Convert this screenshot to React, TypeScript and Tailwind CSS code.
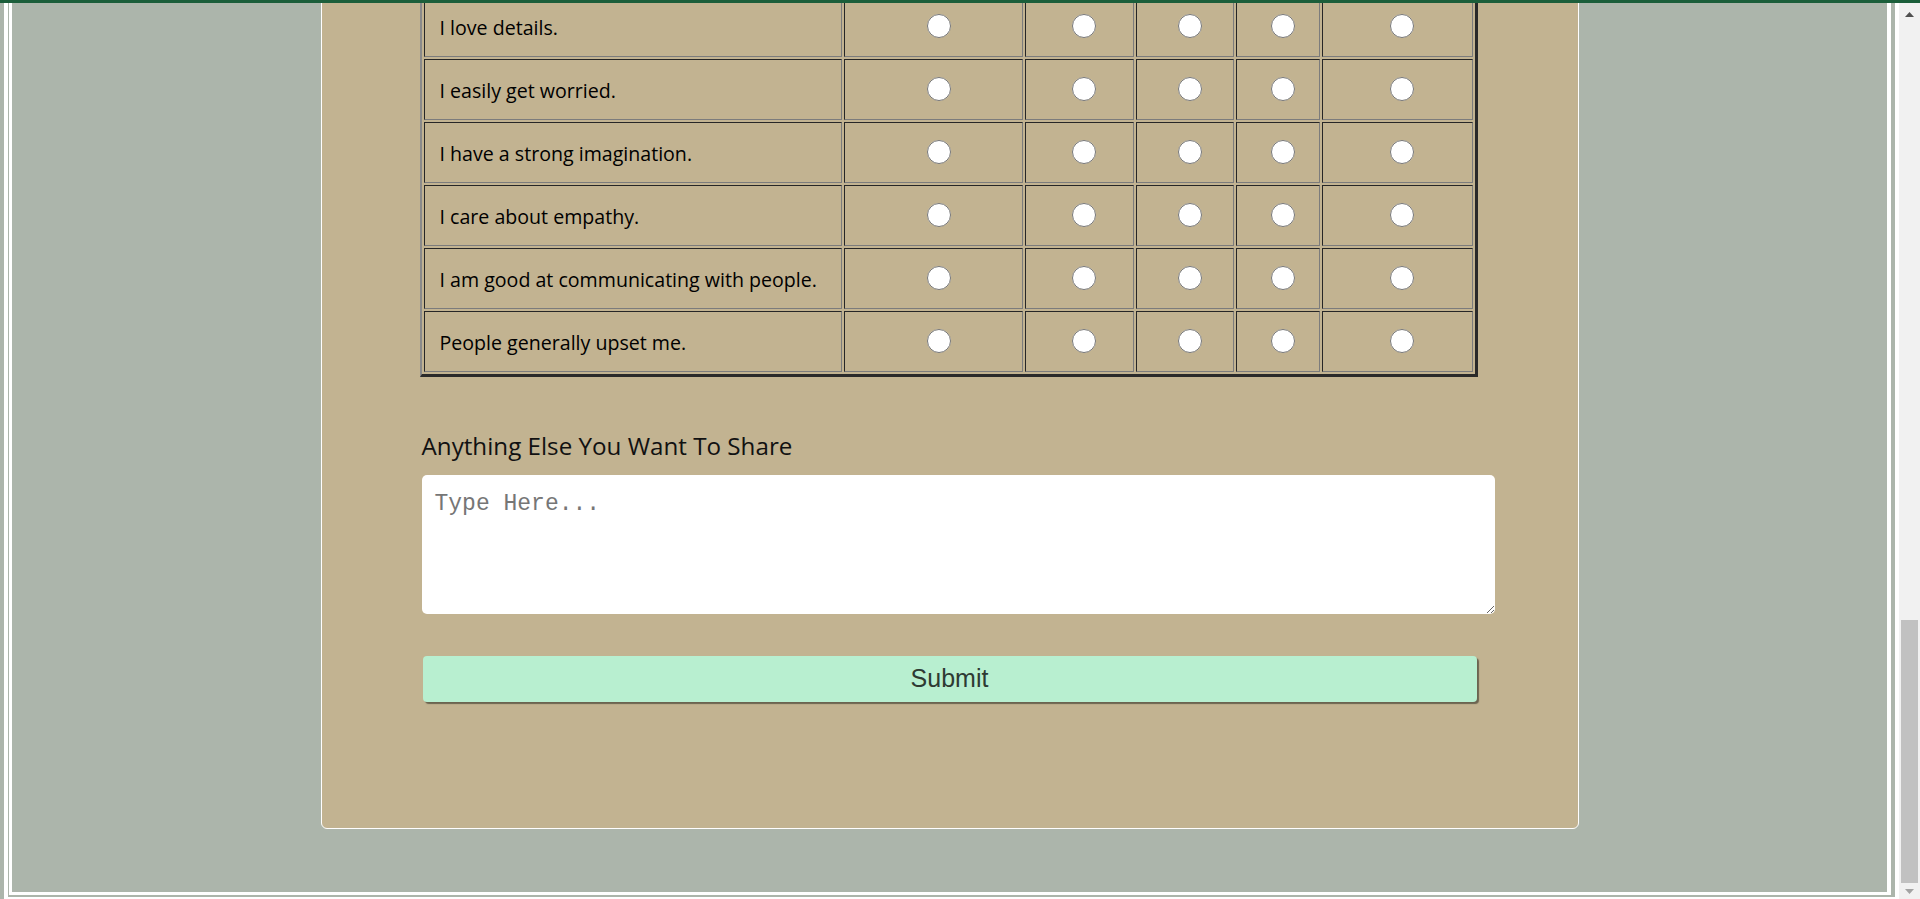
import React from "react";

const statements = [
  "I love details.",
  "I easily get worried.",
  "I have a strong imagination.",
  "I care about empathy.",
  "I am good at communicating with people.",
  "People generally upset me.",
];

// widths of the answer columns, first one is the statement column
const colWidths = ["w-[419px]", "w-[179px]", "w-[109px]", "w-[98px]", "w-[84px]", "w-[151px]"];

const cellBorder =
  "h-[61px] border border-t-[#262626] border-l-[#262626] border-b-[#7c7c7c] border-r-[#7c7c7c]";

const Scrollbar = () => {
  return (
    <div className="w-[21px] shrink-0 bg-[#f1f1f1] flex flex-col items-center">
      <div className="h-[17px] pt-[5px] flex items-center justify-center">
        <svg width="9" height="5" viewBox="0 0 9 5">
          <polygon points="0,5 4.5,0 9,5" fill="#505050" />
        </svg>
      </div>
      <div className="flex-1" />
      <div className="w-[17px] h-[263px] bg-[#c1c1c1]" />
      <div className="h-[16px] flex items-center justify-center">
        <svg width="9" height="5" viewBox="0 0 9 5">
          <polygon points="0,0 9,0 4.5,5" fill="#a3a3a3" />
        </svg>
      </div>
    </div>
  );
};

const App = () => {
  return (
    <div className="w-[1920px] h-[899px] overflow-hidden flex flex-col bg-[#acb5ab] font-['Open_Sans',sans-serif]">
      <div className="h-[3px] shrink-0 bg-[#1b5e3a]" />
      <div className="flex-1 flex min-h-0">
        <div className="flex-1 pl-1 flex flex-col min-h-0">
          <div className="flex-1 min-h-0 flex flex-col border-x-4 border-b-2 border-white pl-px pr-1 pb-[2px]">
            <div className="flex-1 min-h-0 flex flex-col justify-end overflow-hidden border-l-[3px] border-r-4 border-b-[3px] border-white">
              <div className="w-[1258px] shrink-0 self-center mb-[63px] bg-[#c2b391] border border-white rounded-md px-[100px] pt-10 pb-[126px]">
                <table className="-ml-[2px] border-separate border-spacing-[2px] border-l-2 border-t-2 border-r-[3px] border-b-[3px] border-l-[#8a8a8a] border-t-[#8a8a8a] border-r-[#2a2a2a] border-b-[#2a2a2a]">
                  <tbody>
                    {statements.map((s, i) => (
                      <tr key={i}>
                        <td className={`${cellBorder} ${colWidths[0]} pl-[15px] pt-[2px] text-left align-middle text-[19.6px] leading-[28px] text-black`}>
                          {s}
                        </td>
                        {colWidths.slice(1).map((w, j) => (
                          <td key={j} className={`${cellBorder} ${w} text-center align-middle`}>
                            <input
                              type="radio"
                              name={"q" + i}
                              className="inline-block align-middle w-6 h-6 ml-[10px] -mt-[4px]"
                            />
                          </td>
                        ))}
                      </tr>
                    ))}
                  </tbody>
                </table>

                <h3 className="mt-[53px] text-[24.2px] leading-[32px] font-medium text-[#111]">
                  Anything Else You Want To Share
                </h3>
                <textarea
                  placeholder="Type Here..."
                  className="block mt-[13px] w-[1073px] h-[139px] rounded-[5px] bg-white px-[13px] pt-[16px] font-['Liberation_Mono',monospace] text-[23px] leading-[1.2] placeholder:text-[#767676] outline-none"
                />
                <button className="block mt-[42px] ml-px w-[1054px] h-[46px] rounded-[4px] bg-[#b8efd0] shadow-[2px_2px_1px_#6b6450] font-['Liberation_Sans',Arial,sans-serif] text-[25px] text-[#2e3a33]">
                  Submit
                </button>
              </div>
            </div>
          </div>
        </div>
        <Scrollbar />
      </div>
    </div>
  );
};

export default App;
